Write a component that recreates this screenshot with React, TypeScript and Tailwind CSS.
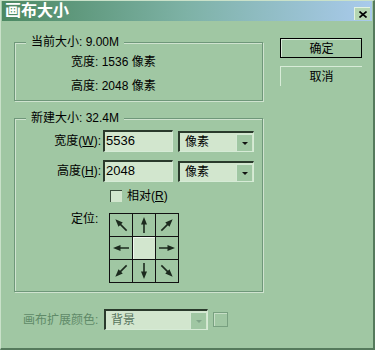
import React from "react";

const FONT = { fontFamily: '"Liberation Sans", "Noto Sans CJK SC", sans-serif' };

// arrow drawn pointing up, rotated per cell
const Arrow: React.FC<{ rot: string }> = ({ rot }) => (
  <svg width="22" height="22" viewBox="0 0 22 22" className={rot}>
    <line x1="11" y1="19" x2="11" y2="8" stroke="#1c2a1e" strokeWidth="1.6" />
    <polygon points="11,3 8,10.5 14,10.5" fill="#1c2a1e" />
  </svg>
);

const DropButton: React.FC<{ disabled?: boolean }> = ({ disabled }) => (
  <div className="w-[16px] h-[17px] mt-[1px] mr-[1px] bg-[#a0c7a3] border-t border-l border-[#d4e9d4] border-r-[#3c5642] border-b-[#3c5642] flex items-center justify-center">
    <div
      className={`w-0 h-0 border-l-[3px] border-r-[3px] border-t-[3px] border-l-transparent border-r-transparent ${
        disabled ? "border-t-[#7fa488]" : "border-t-[#111]"
      }`}
    ></div>
  </div>
);

const Select: React.FC<{ label: string; w: string; disabled?: boolean }> = ({ label, w, disabled }) => (
  <div
    className={`${w} h-[21px] bg-[#d2e6ce] border-t-2 border-l-2 border-[#2a3a2c] border-r border-b border-r-[#d6ebd6] border-b-[#d6ebd6] flex items-start justify-between`}
  >
    <span className={`pl-[5px] leading-[18px] text-[12px] ${disabled ? "text-[#56745c]" : "text-black"}`}>{label}</span>
    <DropButton disabled={disabled} />
  </div>
);

export default function App() {
  const arrows = [
    "-rotate-45",
    "rotate-0",
    "rotate-45",
    "-rotate-90",
    "",
    "rotate-90",
    "rotate-[-135deg]",
    "rotate-180",
    "rotate-[135deg]",
  ];

  return (
    <div
      style={FONT}
      className="w-[375px] h-[350px] bg-[#a0c7a3] border-t border-l border-[#c9e1c9] border-r-2 border-b-2 border-r-[#557a5c] border-b-[#557a5c] flex flex-col text-[12px] text-black overflow-hidden"
    >
      {/* Title bar */}
      <div className="h-[20px] mx-[1px] bg-gradient-to-r from-[#4b8862] via-[#7eb2a6] to-[#a9caec] flex items-center justify-between">
        <span className="pl-[3px] text-white font-bold text-[16px] leading-[20px]">画布大小</span>
        <div className="w-[16px] h-[13px] mr-[2px] mt-[5px] bg-[#b5d6b2] border-t border-l border-[#e2f2e2] border-r-[#3a5440] border-b-[#3a5440] flex items-center justify-center">
          <svg width="8" height="7" viewBox="0 0 8 7">
            <path d="M0.5 0.5 L7.5 6.5 M7.5 0.5 L0.5 6.5" stroke="#000" strokeWidth="1.6" />
          </svg>
        </div>
      </div>

      <div className="flex">
        {/* Left column */}
        <div className="pl-[13px] w-[262px] flex flex-col">
          {/* Current size */}
          <div className="mt-[21px] h-[59px] border border-[#6f977a] shadow-[inset_1px_1px_0_#cfe3cf,1px_1px_0_#cfe3cf] flex flex-col">
            <span className="-mt-[8px] ml-[11px] px-[5px] w-fit bg-[#a0c7a3] leading-[14px]">当前大小: 9.00M</span>
            <div className="mt-[6px] pl-[56px] leading-[14px]">宽度: 1536 像素</div>
            <div className="mt-[10px] pl-[56px] leading-[14px]">高度: 2048 像素</div>
          </div>

          {/* New size */}
          <div className="mt-[17px] h-[174px] border border-[#6f977a] shadow-[inset_1px_1px_0_#cfe3cf,1px_1px_0_#cfe3cf] flex flex-col">
            <span className="-mt-[8px] ml-[11px] px-[5px] w-fit bg-[#a0c7a3] leading-[14px]">新建大小: 32.4M</span>

            <div className="mt-[5px] flex items-center">
              <span className="w-[86px] text-right leading-[14px]">
                宽度(<u>W</u>):
              </span>
              <div className="ml-[2px] w-[70px] h-[22px] bg-[#d2e6ce] border-t-2 border-l-2 border-[#2a3a2c] border-r border-b border-r-[#d6ebd6] border-b-[#d6ebd6] pl-[1px] leading-[18px] text-[13px]">
                5536
              </div>
              <div className="ml-[5px] mt-[1px]">
                <Select label="像素" w="w-[76px]" />
              </div>
            </div>

            <div className="mt-[8px] flex items-center">
              <span className="w-[86px] text-right leading-[14px]">
                高度(<u>H</u>):
              </span>
              <div className="ml-[2px] w-[70px] h-[22px] bg-[#d2e6ce] border-t-2 border-l-2 border-[#2a3a2c] border-r border-b border-r-[#d6ebd6] border-b-[#d6ebd6] pl-[1px] leading-[18px] text-[13px]">
                2048
              </div>
              <div className="ml-[5px] mt-[1px]">
                <Select label="像素" w="w-[76px]" />
              </div>
            </div>

            <div className="mt-[7px] pl-[95px] flex items-center">
              <div className="w-[12px] h-[12px] bg-[#d2e6ce] border-t border-l border-[#3a4c3c] border-r-[#e0f0e0] border-b-[#e0f0e0]"></div>
              <span className="ml-[5px] leading-[14px]">
                相对(<u>R</u>)
              </span>
            </div>

            <div className="mt-[10px] pl-[56px] flex items-start">
              <span className="w-[38px] leading-[14px] mt-[-1px]">定位:</span>
              <div className="grid grid-cols-[22px_22px_22px] gap-px bg-[#111] border border-[#111]">
                {arrows.map((r, i) =>
                  i === 4 ? (
                    <div key={i} className="w-[22px] h-[22px] bg-[#d2e6ce] border-t border-l border-[#eef8ee]"></div>
                  ) : (
                    <div key={i} className="w-[22px] h-[22px] bg-[#a0c7a3] flex items-center justify-center">
                      <Arrow rot={r} />
                    </div>
                  )
                )}
              </div>
            </div>
          </div>

          {/* Canvas extension colour (disabled) */}
          <div className="mt-[17px] pl-[9px] flex items-center">
            <span className="w-[81px] text-[#5f8a68] leading-[14px]">画布扩展颜色:</span>
            <Select label="背景" w="w-[104px]" disabled />
            <div className="ml-[5px] w-[15px] h-[15px] border border-[#78a080] shadow-[inset_1px_1px_0_#c6dec6]"></div>
          </div>
        </div>

        {/* Right column: buttons */}
        <div className="ml-[17px] pt-[17px] flex flex-col gap-[8px]">
          <div className="w-[82px] h-[20px] border border-black">
            <div className="h-full border-t border-l border-[#d8ecd8] border-r-[#4d6e54] border-b-[#4d6e54] flex items-center justify-center leading-[14px]">
              确定
            </div>
          </div>
          <div className="w-[82px] h-[20px] border-t border-l border-[#d8ecd8] border-r-[#2c4030] border-b-[#2c4030] flex items-center justify-center leading-[14px]">
            取消
          </div>
        </div>
      </div>
    </div>
  );
}
